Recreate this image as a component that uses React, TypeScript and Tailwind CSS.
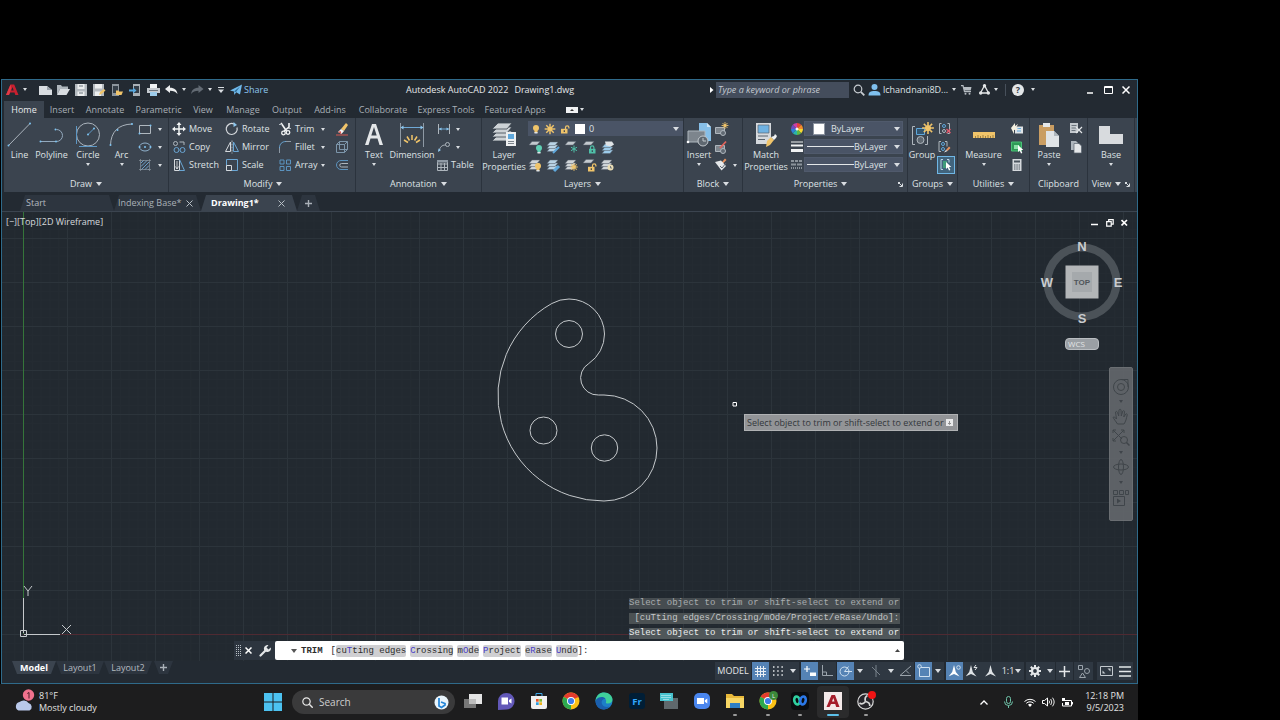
import type { ReactNode } from "react";

const INK = "#d9dde1";
const GOLD = "#f0c46a";

type IconProps = { w?: number; h?: number; box?: string; children: ReactNode };

function Icon({ w = 16, h = 16, box, children }: IconProps) {
  return (
    <svg width={w} height={h} viewBox={box ?? `0 0 ${w} ${h}`} fill="none" className="block shrink-0" aria-hidden="true">
      {children}
    </svg>
  );
}

function Caret({ small = false, color = INK }: { small?: boolean; color?: string }) {
  return small ? (
    <Icon w={4} h={3}>
      <path d="M0 0h4L2 3z" fill={color} />
    </Icon>
  ) : (
    <Icon w={6} h={4}>
      <path d="M0 0h6L3 4z" fill={color} />
    </Icon>
  );
}

function IconButton({ label, className = "", children }: { label: string; className?: string; children: ReactNode }) {
  return (
    <button type="button" aria-label={label} className={`flex shrink-0 items-center justify-center ${className}`}>
      {children}
    </button>
  );
}

/* ---------- ribbon building blocks ---------- */

function Panel({ title, caret = true, launcher = false, className, children }: { title: string; caret?: boolean; launcher?: boolean; className: string; children: ReactNode }) {
  return (
    <section className={`flex shrink-0 flex-col border-r border-[#2b333d] ${className}`}>
      <div className="flex h-[58px] pt-0.5">{children}</div>
      <div className="flex h-4 items-center">
        <button type="button" className="flex flex-1 items-center justify-center gap-1">
          {title}
          {caret && <Caret />}
        </button>
        {launcher && (
          <IconButton label={`${title} settings`} className="mr-1">
            <Icon w={5} h={5}>
              <path d="M0 .5h2M.5 0v2M1 1l3 3M4.500 1.500v3h-3" stroke={INK} />
            </Icon>
          </IconButton>
        )}
      </div>
    </section>
  );
}

function BigTool({ label, caret = false, className, children }: { label: ReactNode; caret?: boolean; className: string; children: ReactNode }) {
  return (
    <button type="button" className={`flex shrink-0 flex-col items-center ${className}`}>
      <span className="flex h-[29px] items-center">{children}</span>
      <span className="text-center leading-3 whitespace-nowrap">{label}</span>
      {caret && (
        <span className="mt-0.5">
          <Caret small />
        </span>
      )}
    </button>
  );
}

function Stack({ className = "", children }: { className?: string; children: ReactNode }) {
  return <div className={`flex shrink-0 flex-col ${className}`}>{children}</div>;
}

function Tool({ label, text, caret = false, children }: { label: string; text?: boolean; caret?: boolean; children: ReactNode }) {
  return (
    <div className="flex h-[18px] items-center">
      <button type="button" aria-label={label} className="flex items-center gap-0.5">
        {children}
        {text && <span className="whitespace-nowrap">{label}</span>}
      </button>
      {caret && (
        <IconButton label={`${label} options`} className="ml-auto w-2.5">
          <Caret small />
        </IconButton>
      )}
    </div>
  );
}

function Sheets({ c = "#cfd4d8", x = 0, y = 0 }: { c?: string; x?: number; y?: number }) {
  return (
    <g transform={`translate(${x} ${y})`} fill={c} stroke="#59636e" strokeWidth=".5">
      <path d="M1 11.500 4 8h8L9 11.500z" />
      <path d="M1 8.500 4 5h8L9 8.500z" />
      <path d="M1 5.500 4 2h8L9 5.500z" />
    </g>
  );
}

function OneSheet() {
  return <path d="M1 6 4 2.500h8L9 6z" fill="#c3c9ce" stroke="#59636e" strokeWidth=".5" />;
}

function Sun({ x, y, r = 2 }: { x: number; y: number; r?: number }) {
  const rays = [0, 45, 90, 135, 180, 225, 270, 315];
  return (
    <g transform={`translate(${x} ${y})`}>
      <circle r={r} fill={GOLD} />
      {rays.map((a) => (
        <path key={a} d={`M0 ${-r}V${-r * 1.9}`} stroke={GOLD} strokeWidth={r * 0.5} transform={`rotate(${a})`} />
      ))}
    </g>
  );
}

function Brush({ x = 0, y = 0 }: { x?: number; y?: number }) {
  return (
    <g transform={`translate(${x} ${y})`}>
      <path d="m3 5 3-3.500L7.500 3 4.500 6z" fill="#e8935f" />
      <path d="M3 5 1 7.500 4.500 6z" fill="#f2f2f2" />
    </g>
  );
}

function Bulb({ x = 0, y = 0, c = GOLD }: { x?: number; y?: number; c?: string }) {
  return (
    <g transform={`translate(${x} ${y})`}>
      <circle cx="3" cy="3" r="3" fill={c} />
      <path d="M1.500 5h3v3h-3z" fill={c} />
      <path d="M1.500 7h3v1.500h-3z" fill="#dfe3e6" />
    </g>
  );
}

function Lock({ x = 0, y = 0, c = GOLD, open = false }: { x?: number; y?: number; c?: string; open?: boolean }) {
  return (
    <g transform={`translate(${x} ${y})`}>
      <path d={open ? "M4.500 4V2.500a1.700 1.700 0 0 1 3.400 0V3.500" : "M1.500 4V2.500a1.700 1.700 0 0 1 3.400 0V4"} stroke={c} strokeWidth="1.200" />
      <path d="M0 3.800h6.500V8.500H0z" fill={c} />
      <path d="M2.700 5.300h1.200v1.700H2.700z" fill="#39424d" />
    </g>
  );
}

function Cursor({ x, y }: { x: number; y: number }) {
  return <path transform={`translate(${x} ${y})`} d="M0 0v7l1.700-1.500L3 8.500l1.300-.6L3.100 5H5.300z" fill="#fff" />;
}

/* ---------- title bar ---------- */

function TitleBar() {
  return (
    <header className="flex h-[19px] items-center">
      <div className="flex w-[404px] shrink-0 items-center">
        <IconButton label="Application menu" className="w-5">
          <Icon w={13} h={12}>
            <path d="M0 11 4.500.5h3.700L12.500 11H9.300L8.500 8.500H4.300L3 11z" fill="#c8202f" />
            <path d="M5.200 6.500h2.500L6.500 3z" fill="#232a32" />
            <path d="M0 11 4.500.5 5.300 4 3 11z" fill="#e23a46" />
          </Icon>
        </IconButton>
        <IconButton label="Application menu options" className="mr-2 w-1.5"><Caret small /></IconButton>
        <IconButton label="New" className="w-[18px]">
          <Icon w={13} h={12}><path d="M0 2h8l5 4v5H0z" fill={INK} /><path d="M8 2v4h5z" fill="#9aa2aa" /></Icon>
        </IconButton>
        <IconButton label="Open" className="w-[18px]">
          <Icon w={14} h={12}><path d="M1 11V1h4l1 1.500h6V5H4z" fill="#aeb5bb" /><path d="M4 5h10l-3.500 6H1z" fill={INK} /></Icon>
        </IconButton>
        <IconButton label="Save" className="w-[18px]">
          <Icon w={12} h={12}><path d="M0 0h12v12H0z" fill="#b4babf" /><path d="M2.500 0h7v5h-7zM2.500 7.500h7V12h-7z" fill="#eceeef" /><path d="M4 9h4M4 2h4" stroke="#6b747d" /></Icon>
        </IconButton>
        <IconButton label="Save as" className="w-[18px]">
          <Icon w={13} h={12}><path d="M0 0h11v12H0z" fill="#b4babf" /><path d="M2 0h7v4.500H2zM2 7.500h6V12H2z" fill="#eceeef" /><path d="m6 11 1-3 4-3 1.500 1.500L8.500 10z" fill={GOLD} /></Icon>
        </IconButton>
        <IconButton label="Open from web and mobile" className="w-[18px]">
          <Icon w={12} h={12}><path d="M1 0h7v12H1z" fill="#8c959d" /><path d="M2 2h5v7H2z" fill="#353f49" /><path d="M5 11V6.500h2.500L8 7.500h4L10.500 11z" fill={GOLD} /></Icon>
        </IconButton>
        <IconButton label="Save to web and mobile" className="w-[18px]">
          <Icon w={12} h={12}><path d="M4 0h7v12H4z" fill="#aab1b7" /><path d="M5 2h5v7H5z" fill="#353f49" /><path d="M0 5.500h4V3.500L7.500 6.500 4 9.500V7.500H0z" fill="#5aa9de" /></Icon>
        </IconButton>
        <IconButton label="Plot" className="w-[18px]">
          <Icon w={13} h={12}><path d="M3 0h7v4H3z" fill="#f1f3f4" /><path d="M0 4h13v5H0z" fill="#c5cacf" /><path d="M3 8h7v4H3z" fill="#9ccbea" /><path d="M2 6.500h9" stroke="#6b747d" /></Icon>
        </IconButton>
        <IconButton label="Undo" className="w-[18px]">
          <Icon w={13} h={10}><path d="M0 4 5 0v2.700C9.500 2.700 12 5 12.500 9 10.500 6.500 8.500 5.700 5 5.700V8z" fill="#eceeef" /></Icon>
        </IconButton>
        <IconButton label="Undo history" className="w-2"><Caret small /></IconButton>
        <IconButton label="Redo" className="w-[18px]">
          <Icon w={13} h={10}><path d="M12.500 4 7.500 0v2.700C3 2.700.5 5 0 9c2-2.500 4-3.300 7.500-3.300V8z" fill="#626a73" /></Icon>
        </IconButton>
        <IconButton label="Redo history" className="w-2"><Caret small /></IconButton>
        <IconButton label="Customize quick access toolbar" className="mr-1 ml-0.5 w-2.5">
          <Icon w={6} h={6}><path d="M0 .5h6" stroke={INK} /><path d="M0 2.500h6L3 6z" fill={INK} /></Icon>
        </IconButton>
        <button type="button" className="flex items-center gap-0.5 text-[#8cc6ee]">
          <Icon w={12} h={12}><path d="M0 6.500 12 .5 10 10.500 6.200 8.200 4.300 11 4 7.500z" fill="#70b9ea" /><path d="m4 7.500 6-5-4 5.500" fill="#2c6b96" /></Icon>
          Share
        </button>
      </div>
      <h1 className="flex flex-1 gap-1.5 font-normal whitespace-pre text-[#e6e8ea]"><span>Autodesk AutoCAD 2022</span><span>Drawing1.dwg</span></h1>
      <div className="flex items-center">
        <Icon w={4} h={6}><path d="M0 0v6l3.500-3z" fill="#fff" /></Icon>
        <input aria-label="Search" placeholder="Type a keyword or phrase" className="ml-0.5 h-4 w-[133px] bg-[#444d5c] px-0.5 italic placeholder:text-[#c3c9d0]" />
        <IconButton label="Search help" className="w-[19px]">
          <Icon w={12} h={12}><circle cx="5" cy="5" r="3.800" stroke="#c8cdd2" strokeWidth="1.200" /><path d="m7.800 7.800 3.500 3.500" stroke="#c8cdd2" strokeWidth="1.800" /></Icon>
        </IconButton>
        <button type="button" className="flex w-20 items-center gap-0.5 whitespace-nowrap">
          <Icon w={13} h={12}><circle cx="6.500" cy="3" r="3" fill="#7fc0ee" /><path d="M.5 11.500c0-3.500 2-4.500 6-4.500s6 1 6 4.500z" fill="#7fc0ee" /></Icon>
          lchandnani8D...
        </button>
        <IconButton label="Account options" className="ml-1 w-1"><Caret small /></IconButton>
        <IconButton label="App store" className="ml-0.5 w-4">
          <Icon w={11} h={10}><path d="M0 .7h2l1.500 6H10" stroke="#b5bbc1" strokeWidth="1.200" /><path d="M2.500 2h8L9.700 5.500H3.300z" fill="#b5bbc1" /><circle cx="4.500" cy="8.700" r="1" fill="#b5bbc1" /><circle cx="8.500" cy="8.700" r="1" fill="#b5bbc1" /></Icon>
        </IconButton>
        <IconButton label="Autodesk app" className="ml-0.5 w-4">
          <Icon w={11} h={11}><path d="M5.500 1.500 1.500 9h8z" stroke="#e3e6e8" strokeWidth="1.300" /><circle cx="5.500" cy="1.800" r="1.700" fill="#e3e6e8" /><circle cx="1.700" cy="9" r="1.700" fill="#e3e6e8" /><circle cx="9.300" cy="9" r="1.700" fill="#e3e6e8" /></Icon>
        </IconButton>
        <IconButton label="Autodesk app options" className="mx-0.5 w-1"><Caret small /></IconButton>
        <span className="mx-[5px] h-3 w-px bg-[#47505b]" />
        <IconButton label="Help" className="w-3.5">
          <span className="flex size-3 items-center justify-center rounded-full bg-[#e3e6e8] font-bold text-[#343c46]">?</span>
        </IconButton>
        <IconButton label="Help options" className="ml-1.5 w-1"><Caret small /></IconButton>
        <IconButton label="Minimize" className="ml-[46px] w-[18px]"><Icon w={8} h={8}><path d="M1 7h6" stroke="#fff" strokeWidth="1.500" /></Icon></IconButton>
        <IconButton label="Maximize" className="w-[18px]"><Icon w={9} h={8}><path d="M.5.500h8v7h-8zM.5 1.500h8" stroke="#fff" /></Icon></IconButton>
        <IconButton label="Close" className="mr-0.5 w-[18px]"><Icon w={8} h={8}><path d="m.5.500 7 7m0-7-7 7" stroke="#fff" strokeWidth="1.500" /></Icon></IconButton>
      </div>
    </header>
  );
}

const MENU = [
  ["Home", "w-10"], ["Insert", "w-9"], ["Annotate", "w-[50px]"], ["Parametric", "w-[57px]"], ["View", "w-8"],
  ["Manage", "w-12"], ["Output", "w-10"], ["Add-ins", "w-[46px]"], ["Collaborate", "w-[60px]"],
  ["Express Tools", "w-[66px]"], ["Featured Apps", "w-[72px]"],
];

function MenuTabs() {
  return (
    <nav className="mt-0.5 flex h-[17px] items-center pl-0.5">
      {MENU.map(([name, w], i) => (
        <button key={name} type="button" className={`h-full shrink-0 whitespace-nowrap ${w} ${i === 0 ? "bg-[#3b444f] text-[#e9ebed]" : "text-[#a9b0b7]"}`}>
          {name}
        </button>
      ))}
      <IconButton label="Ribbon display" className="ml-[15px]">
        <Icon w={12} h={6}><path d="M0 0h12v6H0z" fill="#f0f2f3" /><path d="M4 4h4L6 2z" fill="#333" /></Icon>
      </IconButton>
      <IconButton label="Ribbon display options" className="ml-0.5"><Caret small /></IconButton>
    </nav>
  );
}

/* ---------- ribbon ---------- */

const dot = (x: number, y: number) => <circle key={`${x}-${y}`} cx={x} cy={y} r="1" fill="#7ec3f0" />;

function DrawPanel() {
  return (
    <Panel title="Draw" className="w-[165px]">
      <BigTool label="Line" className="w-[31px]">
        <Icon w={25} h={25}><path d="M1.500 23.500 23 1.500" stroke="#aab3bc" />{dot(1.5, 23.5)}{dot(23, 1.5)}</Icon>
      </BigTool>
      <BigTool label="Polyline" className="w-[33px]">
        <Icon w={25} h={20}><path d="M1.500 16.500h16a6 6 0 0 0 0-12" stroke="#93a9bd" />{dot(1.5, 16.5)}{dot(17, 16.5)}{dot(16.5, 4.5)}</Icon>
      </BigTool>
      <BigTool label="Circle" caret className="w-10">
        <Icon w={26} h={26}><circle cx="13" cy="12.500" r="11.500" stroke="#aab3bc" /><path d="m13 12.500 6-6M1.500 4v18M4 24.500h18" stroke="#5d97c4" />{dot(19, 6.5)}{dot(13, 12.5)}</Icon>
      </BigTool>
      <BigTool label="Arc" caret className="w-[27px]">
        <Icon w={25} h={25}><path d="M1.500 23C2 10 9 2.500 23 2" stroke="#aab3bc" />{dot(1.5, 23)}{dot(8.5, 8)}{dot(23, 2)}</Icon>
      </BigTool>
      <Stack className="w-[30px] pl-0.5">
        <Tool label="Rectangle" caret><Icon><path d="M2.500 4.500h11v8h-11z" stroke="#b0b8bf" />{dot(2.5, 12.5)}{dot(13.5, 4.5)}</Icon></Tool>
        <Tool label="Ellipse" caret><Icon><ellipse cx="8" cy="8" rx="5.500" ry="4" stroke="#8fb0cb" />{dot(8, 8)}{dot(2.5, 8)}{dot(13.5, 8)}</Icon></Tool>
        <Tool label="Hatch" caret><Icon><path d="m4 6 3-3M4 9.500 10.500 3M4 13l8-8M7.500 13 12 8.500M11 13l1-1" stroke="#6d9fc6" /><path d="M3.500 2v12M12.500 2v12M2 3.500h12M2 12.500h12" stroke="#8b959e" strokeWidth=".7" /></Icon></Tool>
      </Stack>
    </Panel>
  );
}

function ModifyPanel() {
  return (
    <Panel title="Modify" className="w-[187px] pl-0.5">
      <Stack className="w-[53px]">
        <Tool label="Move" text><Icon><path d="M8 2v12M2 8h12" stroke="#f1f3f4" strokeWidth="1.500" /><path d="M8 1l2.500 3h-5zM8 15l2.500-3h-5zM1 8l3-2.500v5zM15 8l-3-2.500v5z" fill="#f1f3f4" /></Icon></Tool>
        <Tool label="Copy" text><Icon><circle cx="4.500" cy="4.500" r="2" stroke="#aeb6bd" /><path d="M8.500 3H13v3" stroke="#aeb6bd" /><circle cx="5.500" cy="11" r="2.500" stroke="#6aa6d4" /><circle cx="11.500" cy="11" r="2.500" stroke="#6aa6d4" /></Icon></Tool>
        <Tool label="Stretch" text><Icon><path d="M3.500 2.500h5v11h-5z" stroke="#d5d9dd" /><path d="m8.500 2.500 5 11h-5" stroke="#6aa6d4" /><path d="M6 4v8M4.500 9.500 6 12l1.500-2.500" stroke="#e4e7e9" strokeWidth=".8" /></Icon></Tool>
      </Stack>
      <Stack className="w-[53px]">
        <Tool label="Rotate" text><Icon><path d="M10 3a5.500 5.500 0 1 0 3 3.500" stroke="#d5d9dd" strokeWidth="1.200" /><path d="M9.500 1v5l3.500-2z" fill="#8cc6ee" /></Icon></Tool>
        <Tool label="Mirror" text><Icon><path d="M6.500 3v9.500h-5z" stroke="#d5d9dd" /><path d="M9.500 3v9.500h5z" stroke="#6aa6d4" /><path d="M8 1.500v13" stroke="#aeb6bd" strokeDasharray="2 1" /></Icon></Tool>
        <Tool label="Scale" text><Icon><path d="M2.500 2.500h11v11h-11z" stroke="#6aa6d4" /><path d="M2.500 8.500h5v5h-5z" stroke="#d5d9dd" fill="#3b444f" /></Icon></Tool>
      </Stack>
      <Stack className="w-[51px]">
        <Tool label="Trim" text caret><Icon><path d="m4 2 5.500 8M12 2v4L7 10" stroke="#f1f3f4" strokeWidth="1.600" /><path d="M2 3.500h3M11 7.500h3" stroke="#aeb6bd" /><circle cx="6.500" cy="12" r="1.800" stroke="#f1f3f4" strokeWidth="1.300" /><circle cx="11" cy="11.500" r="1.800" stroke="#f1f3f4" strokeWidth="1.300" /></Icon></Tool>
        <Tool label="Fillet" text caret><Icon><path d="M2.500 14V8M8 2.500h6" stroke="#8e99a4" /><path d="M2.500 9c0-4 2.500-6.500 6.500-6.500" stroke="#6aa6d4" /></Icon></Tool>
        <Tool label="Array" text caret><Icon><path d="M3 3h4v4H3zM3 9.500h4v4H3zM9.500 9.500h4v4h-4zM9.500 3h4v4h-4z" stroke="#5b93bf" /></Icon></Tool>
      </Stack>
      <Stack className="ml-1.5">
        <Tool label="Erase"><Icon><path d="M7 8 12 2l2 2-4 6z" fill="#f0c46a" /><path d="m7 8 3 2-2.500 3L4 11z" fill="#f4f5f6" /><path d="M4 11l2.500-1 1 3z" fill="#e04a3f" /><path d="M2 14h12" stroke="#d8574f" /></Icon></Tool>
        <Tool label="Explode"><Icon><path d="M2.500 5.500h8v8h-8zM5.500 2.500h8v8h-8z" stroke="#7d96ab" /><path d="M2.500 5.500l3-3M10.500 5.500l3-3M10.500 13.500l3-3" stroke="#7d96ab" /></Icon></Tool>
        <Tool label="Offset"><Icon><path d="M14 3.500H7a4.500 4.500 0 0 0 0 9h7" stroke="#5b93bf" /><path d="M14 6.500H7.500a1.700 1.700 0 0 0 0 3.500H14" stroke="#aeb6bd" /></Icon></Tool>
      </Stack>
    </Panel>
  );
}

function AnnotationPanel() {
  return (
    <Panel title="Annotation" className="w-[126px]">
      <BigTool label="Text" caret className="w-9">
        <Icon w={20} h={24}><path d="M8 1h4l7 21h-3.500l-2-6.500H6.500l-2 6.500H1zM7.300 12.500h5.400L10 4z" fill="#e4e7e9" /></Icon>
      </BigTool>
      <BigTool label="Dimension" className="w-10">
        <Icon w={26} h={26}><path d="M1.500 1v24M24.500 1v24" stroke="#8e99a4" /><path d="M2 5.500h22" stroke="#6fa9d6" /><path d="m1.500 5.500 3-2v4zM24.500 5.500l-3-2v4z" fill="#8cc6ee" /><path d="M13 13v5M8 14.500l2.500 4M18 14.500l-2.500 4M5 18l4 2.500M21 18l-4 2.500" stroke={GOLD} strokeWidth="1.500" /></Icon>
      </BigTool>
      <Stack className="ml-1 w-[27px]">
        <Tool label="Linear" caret><Icon><path d="M2.500 3v10M13.500 3v10" stroke="#aeb6bd" /><path d="M3 8h10" stroke="#6aa6d4" /><path d="m3 8 2.500-1.500v3zM13 8l-2.500-1.500v3z" fill="#8cc6ee" /></Icon></Tool>
        <Tool label="Leader" caret><Icon><path d="M3 12c1-4 3-6 6.500-6" stroke="#aeb6bd" /><circle cx="11.500" cy="5.500" r="2" stroke="#aeb6bd" /><path d="m2 13 .5-3.500L5 11z" fill="#8cc6ee" /></Icon></Tool>
        <Tool label="Table" text><Icon w={13}><path d="M1.500 3.500h10v10h-10zM1.500 7h10M1.500 10.500h10M5 6v7M8.500 6v7" stroke="#aeb6bd" /><path d="M1 3h11v2.500H1z" fill="#8e99a4" /></Icon></Tool>
      </Stack>
    </Panel>
  );
}

function LayersPanel() {
  return (
    <Panel title="Layers" className="w-[202px]">
      <BigTool label={<>Layer<br />Properties</>} className="w-11">
        <Icon w={26} h={26}>
          <g fill="#cdd2d6" stroke="#3b444f" strokeWidth=".8"><path d="m1 19 6-6h14l-5 6z" /><path d="m1 15 6-6h14l-5 6z" /><path d="m1 11 6-6h14l-5 6z" /><path d="m1 7 6-6h14l-5 6z" /></g>
          <path d="M15 10h10v14H15z" fill="#eef0f1" /><path d="M17 12h6v5h-6z" fill="#5fa8dc" /><path d="M17 19.500h6M17 21.500h6" stroke="#7d858d" />
        </Icon>
      </BigTool>
      <div className="ml-0.5 flex flex-1 flex-col">
        <div className="mt-px mb-0.5 flex h-[15px] items-center bg-[#4a5466] pr-1">
          <Icon w={16}><Bulb x={5} y={4} /></Icon>
          <Icon w={14}><Sun x={6} y={8} r={2.8} /></Icon>
          <Icon w={15}><Lock x={3} y={4} open /></Icon>
          <span className="mx-0.5 size-2.5 bg-white" />
          <select aria-label="Current layer" className="min-w-0 flex-1 appearance-none bg-transparent pl-0.5">
            <option>0</option>
          </select>
          <Caret />
        </div>
        <div className="grid grid-cols-[repeat(5,18px)]">
          <Tool label="Layer off"><Icon><OneSheet /><Bulb x={8} y={6} c="#5fd0b5" /></Icon></Tool>
          <Tool label="Isolate layer"><Icon><Sheets y={1} c="#b9d3e6" /><path d="m7 14 6-6" stroke="#5fa8dc" strokeWidth="2" /></Icon></Tool>
          <Tool label="Freeze layer"><Icon><OneSheet /><path d="M10 6.500v7M7 8.200l6 3.500M13 8.200l-6 3.500" stroke="#4fbfa8" /></Icon></Tool>
          <Tool label="Lock layer"><Icon><OneSheet /><Lock x={7} y={6} c="#4fbfa8" /></Icon></Tool>
          <Tool label="Make current"><Icon><Sheets x={1} y={3} c="#9ccbea" /><path d="M5 2.500h7l2 3-3 2-5-1z" fill="#dfe3e6" /></Icon></Tool>
          <Tool label="Turn all layers on"><Icon><Sheets y={1} /><Bulb x={7} y={6} /></Icon></Tool>
          <Tool label="Unisolate layer"><Icon><Sheets y={1} c="#b9d3e6" /><path d="m8 14 5-5" stroke="#5fa8dc" strokeWidth="3" /></Icon></Tool>
          <Tool label="Thaw all layers"><Icon><Sheets y={1} /><Sun x={10} y={10} /></Icon></Tool>
          <Tool label="Unlock layer"><Icon><OneSheet /><Lock x={6} y={6} open /></Icon></Tool>
          <Tool label="Match layer"><Icon><Sheets y={1} /><circle cx="10.500" cy="10.500" r="3" fill="#e9dcb4" /><path d="M10.500 9v2h1.500" stroke="#59636e" strokeWidth=".8" /></Icon></Tool>
        </div>
      </div>
    </Panel>
  );
}

function BlockPanel() {
  return (
    <Panel title="Block" className="w-[59px]">
      <BigTool label="Insert" caret className="w-[30px]">
        <Icon w={26} h={26}><path d="M13 1h8l4 4v14H13z" fill="#86bfe8" /><path d="M21 1v4h4z" fill="#cfe6f6" /><path d="M2 9h17v11H2z" fill="#7d858d" stroke="#aeb6bd" /><circle cx="17" cy="19" r="5" fill="#5f6871" stroke="#c3c9ce" /><path d="M17 16v3h3" stroke="#c3c9ce" /><circle cx="2" cy="20" r="1.300" fill="#fff" /></Icon>
      </BigTool>
      <Stack className="w-[26px]">
        <Tool label="Create block"><Icon><path d="M1.500 6.500h9v6h-9z" fill="#7d858d" stroke="#aeb6bd" /><circle cx="9" cy="12" r="2.500" fill="#5f6871" stroke="#aeb6bd" /><Sun x={11} y={4.5} r={1.8} /></Icon></Tool>
        <Tool label="Edit block"><Icon><path d="M1.500 6.500h9v6h-9z" fill="#7d858d" stroke="#aeb6bd" /><circle cx="9" cy="12" r="2.500" fill="#5f6871" stroke="#aeb6bd" /><path d="M6 9 12 2.500" stroke="#e2645c" strokeWidth="1.800" /></Icon></Tool>
        <Tool label="Edit attributes" caret><Icon><path d="m1 5 6-1.500L12 9l-4.500 4.500z" fill="#e4e7e9" /><path d="m6 9 2 2 4-5" stroke="#5f6871" /><Brush x={5} y={0} /></Icon></Tool>
      </Stack>
    </Panel>
  );
}

function PropertySelect({ label, line }: { label: string; line: boolean }) {
  return (
    <div className="mt-px mb-0.5 flex h-[15px] items-center border border-[#56607280] bg-[#4a5466] pr-0.5">
      {line ? <span className="ml-0.5 h-px w-[47px] bg-[#e4e7e9]" /> : <span className="mr-1.5 ml-2 size-3 border border-[#8c94a0] bg-white" />}
      <select aria-label={label} className="min-w-0 flex-1 appearance-none bg-transparent">
        <option>ByLayer</option>
      </select>
      <Caret />
    </div>
  );
}

const WHEEL = ["#e8403a", "#f28b2b", "#f7d832", "#5cb947", "#2bb5a9", "#2f7fd6", "#6a4ec0", "#c740a6"];

function PropertiesPanel() {
  return (
    <Panel title="Properties" launcher className="w-[165px]">
      <BigTool label={<>Match<br />Properties</>} className="w-[46px]">
        <Icon w={26} h={26}><path d="M3 1h15v21H3z" fill="#d5d9dd" /><path d="M5 3h11v8H5z" fill="#6fb2e2" stroke="#59636e" strokeWidth=".7" /><path d="M5 14h10M5 17.500h7" stroke="#59636e" /><path d="m14 19 4-4 3 3-4 5-4 2z" fill={GOLD} /><path d="m18 15 3-1 1-2 2 2-1 2-2 2z" fill="#f1f3f4" /></Icon>
      </BigTool>
      <Stack className="w-[15px] items-center">
        <Tool label="Colour wheel">
          <Icon w={12} h={12}>
            {WHEEL.map((c, i) => <path key={c} d="M6 6V0a6 6 0 0 1 4.240 1.760z" fill={c} transform={`rotate(${i * 45} 6 6)`} />)}
            <circle cx="6" cy="6" r="1.500" fill="#f3f3f3" />
          </Icon>
        </Tool>
        <Tool label="Lineweight"><Icon w={12} h={12}><path d="M0 1h12" stroke="#f1f3f4" /><path d="M0 4.500h12" stroke="#f1f3f4" strokeWidth="2" /><path d="M0 9.500h12" stroke="#f1f3f4" strokeWidth="3" /></Icon></Tool>
        <Tool label="Linetype"><Icon w={12} h={12}><path d="M0 2h12" stroke="#8b939b" strokeWidth="2" strokeDasharray="3 1" /><path d="M0 5.500h12" stroke="#8b939b" strokeWidth="2" strokeDasharray="5 1" /><path d="M0 9h12" stroke="#8b939b" strokeWidth="2" strokeDasharray="1 1" /></Icon></Tool>
      </Stack>
      <div className="mr-1 flex flex-1 flex-col">
        <PropertySelect label="Object colour" line={false} />
        <PropertySelect label="Lineweight" line />
        <PropertySelect label="Linetype" line />
      </div>
    </Panel>
  );
}

function RestPanels() {
  return (
    <>
      <Panel title="Groups" className="w-[50px]">
        <BigTool label="Group" className="w-7">
          <Icon w={24} h={26}><path d="M5 4.500H2.500v18H5M15 22.500h2.500V14" stroke="#aeb6bd" /><path d="M6.500 6.500h8v6h-8z" fill="#33556f" stroke="#5fa8dc" /><circle cx="10.500" cy="18" r="3.500" fill="#5f6871" stroke="#aeb6bd" /><Sun x={18} y={6} r={3.1} /></Icon>
        </BigTool>
        <Stack className="ml-px">
          <Tool label="Ungroup"><Icon><path d="M4.500 2.500h-2v10h2M10.500 2.500h2v10h-2" stroke="#aeb6bd" /><circle cx="7" cy="5" r="1.500" stroke="#5fa8dc" /><circle cx="7" cy="10" r="1.500" stroke="#aeb6bd" /><path d="m9.500 8 4 4m0-4-4 4" stroke="#e2566a" strokeWidth="1.300" /></Icon></Tool>
          <Tool label="Group edit"><Icon><path d="M4 2.500H2v10h2M8 2.500h2v5" stroke="#aeb6bd" /><circle cx="6" cy="5" r="1.500" stroke="#5fa8dc" /><circle cx="6" cy="10" r="1.500" stroke="#5fa8dc" /><Brush x={6} y={6} /></Icon></Tool>
          <div className="flex h-[18px] items-center">
            <button type="button" aria-label="Group selection" aria-pressed="true" className="size-[18px] border border-[#6fb7e6] bg-[#41647d]">
              <Icon><path d="M5 2.500H3v10h2M9 2.500h2v3" stroke="#b9d4e6" /><path d="M5 4h4v7H5z" fill="#3f9c7c" /><Cursor x={8} y={5} /></Icon>
            </button>
          </div>
        </Stack>
      </Panel>
      <Panel title="Utilities" className="w-[72px]">
        <BigTool label="Measure" caret className="w-[51px]">
          <Icon w={22} h={8}><path d="M0 1h22v6H0z" fill={GOLD} /><path d="M2.500 7V5M5 7V4M7.500 7V5M10 7V4M12.500 7V5M15 7V4M17.500 7V5M20 7V4" stroke="#7a6430" strokeWidth=".7" /></Icon>
        </BigTool>
        <Stack>
          <Tool label="Select all"><Icon><path d="M6 5.500h8v7H6z" fill="#dfe3e6" /><path d="M8 7.500h4M8 10h4" stroke="#5fa8dc" /><path d="M2 7l4-5v3l3-2-2 4 3 1-5 1v4z" fill="#f4f0e0" /></Icon></Tool>
          <Tool label="Quick select"><Icon><path d="M2.500 3h10v9h-10z" fill="#2f9a57" stroke="#49c277" /><path d="M5 6h5v4H5z" fill="#8be0a8" /><Cursor x={9} y={6} /></Icon></Tool>
          <Tool label="Calculator"><Icon><path d="M3.500 2h9v12h-9z" fill="#d5d9dd" /><path d="M5 3.500h6v2H5z" fill="#4b555f" /><path d="M5 8h6M5 10h6M5 12h6" stroke="#4b555f" strokeDasharray="1.500 .8" /></Icon></Tool>
        </Stack>
      </Panel>
      <Panel title="Clipboard" caret={false} className="w-[58px]">
        <BigTool label="Paste" caret className="w-[38px]">
          <Icon w={22} h={26}><path d="M1 3h15v20H1z" fill="#c99d62" /><path d="M5 1h7v4H5z" fill="#e4e7e9" /><path d="M8 9h8l5 5v11H8z" fill="#dfe3e6" /><path d="M16 9v5h5z" fill="#aeb6bd" /></Icon>
        </BigTool>
        <Stack>
          <Tool label="Cut"><Icon><path d="M2 2h8v10H2z" fill="#c3c9ce" /><path d="M3.500 4.500h5M3.500 7h5M3.500 9.500h4" stroke="#6b747d" /><path d="m8 6 6 6m0-6-6 6" stroke="#e4e7e9" strokeWidth="1.200" /></Icon></Tool>
          <Tool label="Copy to clipboard"><Icon><path d="M3 2h5l2 2v7H3z" fill="#aeb6bd" /><path d="M6 4.500h5l2.500 2.500v7H6z" fill="#e4e7e9" stroke="#59636e" strokeWidth=".7" /></Icon></Tool>
        </Stack>
      </Panel>
      <Panel title="View" launcher className="w-[47px]">
        <BigTool label="Base" caret className="w-[46px]">
          <Icon w={24} h={20}><path d="M0 1h11v8h13v10H0z" fill="#d8dbde" /></Icon>
        </BigTool>
      </Panel>
    </>
  );
}

/* ---------- drawing tabs and canvas ---------- */

const plus = <Icon w={7} h={7}><path d="M3.500 0v7M0 3.500h7" stroke="#aab1b8" strokeWidth="1.400" /></Icon>;
const cross = <Icon w={7} h={7}><path d="m.5.500 6 6m0-6-6 6" stroke="#b9c0c6" /></Icon>;
const TAB_SHAPE = "[clip-path:polygon(0_100%,5px_0,calc(100%-5px)_0,100%_100%)]";

function FileTabs() {
  return (
    <div className="flex h-5 items-end border-b border-[#3b444f] bg-[#232a32] pl-[18px]">
      <button type="button" className={`h-4 w-[94px] bg-[#2d353f] pl-1.5 text-left text-[#b4bac0] ${TAB_SHAPE}`}>Start</button>
      <div className={`flex h-4 w-[87px] items-center justify-between bg-[#2d353f] pr-2 pl-1 text-[#aab1b8] ${TAB_SHAPE}`}>
        <button type="button">Indexing Base*</button>
        <button type="button" aria-label="Close Indexing Base">{cross}</button>
      </div>
      <div className={`flex h-4 w-[96px] items-center justify-between bg-[#3b444f] pr-3 pl-2.5 font-bold text-white ${TAB_SHAPE}`}>
        <button type="button">Drawing1*</button>
        <button type="button" aria-label="Close Drawing1">{cross}</button>
      </div>
      <button type="button" aria-label="New drawing" className={`flex h-4 w-[23px] items-center justify-center bg-[#2d353f] ${TAB_SHAPE}`}>{plus}</button>
    </div>
  );
}

const KEYWORDS = [["cu", "T", "ting edges"], ["", "C", "rossing"], ["m", "O", "de"], ["", "P", "roject"], ["e", "R", "ase"], ["", "U", "ndo"]];
const MONO = "font-['Liberation_Mono',monospace]";

function CommandLine() {
  return (
    <div className={`absolute bottom-px left-[232px] flex h-[19px] w-[670px] items-center bg-[#2d353f] ${MONO}`}>
      <span className="ml-0.5 grid grid-cols-3 gap-px">
        {Array.from({ length: 18 }, (_, i) => <i key={i} className="size-px bg-[#b9c0c6]" />)}
      </span>
      <IconButton label="Close command line" className="ml-[3px] w-2"><Icon w={7} h={7}><path d="m.5.500 6 6m0-6-6 6" stroke="#fff" strokeWidth="1.500" /></Icon></IconButton>
      <IconButton label="Customize command line" className="mr-[3px] ml-1.5 w-3.5">
        <Icon w={12} h={12}><path d="m1.500 10.500 5.500-5.500" stroke="#e4e7e9" strokeWidth="2.200" strokeLinecap="round" /><path d="M11.700 2.500 9.500 4.500 7.500 2.500 9.500.3A3.500 3.500 0 1 0 11.700 2.500z" fill="#e4e7e9" /></Icon>
      </IconButton>
      <div className="flex h-full flex-1 items-center rounded-xs bg-white pr-1 pl-4 text-[#2c2c2c]">
        <Icon w={6} h={4}><path d="M0 0h6L3 4z" fill="#555" /></Icon>
        <span className="ml-1 pr-2 font-bold">TRIM</span>
        <span>[</span>
        <span className="flex gap-1">
          {KEYWORDS.map(([a, b, c]) => (
            <button key={c} type="button" className="rounded-xs bg-[#cfcfd2]">
              {a}<span className="text-[#4a3ec8]">{b}</span>{c}
            </button>
          ))}
        </span>
        <span>]:</span>
        <IconButton label="Command history" className="ml-auto"><Icon w={5} h={3}><path d="M0 3h5L2.500 0z" fill="#444" /></Icon></IconButton>
      </div>
    </div>
  );
}

function ViewCube() {
  return (
    <div className="absolute top-6 right-3 flex w-[86px] flex-col items-center">
      <svg width="86" height="92" viewBox="-43 -46 86 92" role="img" aria-label="View cube" className="font-['Liberation_Sans',sans-serif] font-bold">
        <circle r="34.500" fill="none" stroke="#4b5258" strokeWidth="8" />
        <rect x="-16.500" y="-16.500" width="33" height="33" fill="#b3b6b8" />
        <rect x="-10" y="-10" width="20" height="20" fill="#a5a9ac" />
        <g fontSize="13" fill="#c9cccf" textAnchor="middle">
          <text y="-31">N</text>
          <text y="41">S</text>
          <text x="-35" y="5">W</text>
          <text x="36" y="5">E</text>
        </g>
        <text y="3" fontSize="8" fill="#4f555a" textAnchor="middle">TOP</text>
      </svg>
      <button type="button" className="mt-2.5 flex h-3 w-[34px] items-center rounded-sm border border-[#b9bdc1] bg-[#9a9fa4] pl-0.5 text-[8px] text-[#e2e4e6]">WCS</button>
    </div>
  );
}

function NavBar() {
  const s = "#43484d";
  return (
    <div className="absolute top-[155px] right-[4px] flex h-[154px] w-6 flex-col items-center justify-between rounded-xs border border-[#72767a] bg-[#64686c] pt-2.5 pb-3 opacity-90">
      <IconButton label="Steering wheel"><Icon w={18} h={18}><circle cx="9" cy="9" r="7.500" stroke={s} /><circle cx="9" cy="9" r="3.500" stroke={s} /><path d="M9 1.500h7V9" stroke={s} /></Icon></IconButton>
      <Caret small color={s} />
      <IconButton label="Pan"><Icon w={18} h={17}><path d="M5.500 16C3.500 13 2 11 1 9.500c1-1 2.500 0 3.500 1.500L3.500 4c.8-1 1.800-.5 2 .5L6.700 8 7 2c.5-1 1.700-1 2 0l.3 6 1.500-5c.7-.8 1.800-.3 1.700.7L11.800 9l2-3c.7-.6 1.700 0 1.400 1-1 4-1.200 6-3.200 9z" stroke={s} /></Icon></IconButton>
      <IconButton label="Zoom"><Icon w={18} h={17}><path d="m1 1 9 9M12 1 1 12M1 4V1h3M9 1h3v3M1 9v3h3" stroke={s} /><circle cx="12" cy="11" r="3.500" stroke={s} /><path d="m14.500 13.500 3 3" stroke={s} strokeWidth="1.500" /></Icon></IconButton>
      <Caret small color={s} />
      <IconButton label="Orbit"><Icon w={18} h={18}><ellipse cx="9" cy="9" rx="7.500" ry="3" stroke={s} /><ellipse cx="9" cy="9" rx="2.500" ry="7.500" stroke={s} /></Icon></IconButton>
      <Caret small color={s} />
      <IconButton label="Show motion"><Icon w={18} h={20}><path d="M1.500 2.500h4v4h-4zM7.500 2.500h4v4h-4zM13.500 2.500h3v4h-3zM1.500 8.500h11v9h-11z" stroke={s} /><path d="m5 10.500 4 2.500-4 2.500z" fill={s} /></Icon></IconButton>
    </div>
  );
}

function Canvas() {
  return (
    <main className="relative h-[449px] overflow-hidden bg-[#222930]">
      <svg className="absolute inset-0 size-full" role="img" aria-label="Model space drawing">
        <defs>
          <pattern id="minor" width="8.800" height="8.800" patternUnits="userSpaceOnUse" x="21" y="26"><path d="M.5 0v8.800M0 .5h8.800" stroke="#242b32" /></pattern>
          <pattern id="major" width="44" height="44" patternUnits="userSpaceOnUse" x="21" y="26"><path d="M.5 0v44M0 .5h44" stroke="#2c343b" /></pattern>
        </defs>
        <rect width="100%" height="100%" fill="url(#minor)" />
        <rect width="100%" height="100%" fill="url(#major)" />
        <path d="M21.500 0v422" stroke="#35753a" />
        <path d="M21 422.500h2000" stroke="#4f2a32" />
        <g fill="none" stroke="#c5c9cc">
          <path d="M18.500 418.500h6v6h-6zM21.500 421V386M22 422.500h36" />
          <path d="m22 374 4 5 4-5M26 379v5M60 413l9 9M69 413l-9 9" />
          <g transform="translate(-2 -212)">
            <path d="M551.8 303.500A35.500 35.500 0 0 1 569 299A35.500 35.500 0 0 1 604.500 334A35.500 35.500 0 0 1 588.800 363.500A17 17 0 0 0 598.500 395H604A53 53 0 0 1 604 501A105.500 105.500 0 0 1 551.800 303.500z" />
            <circle cx="569" cy="334" r="13.500" />
            <circle cx="543.500" cy="430.500" r="13.500" />
            <circle cx="604.500" cy="448" r="13.200" />
            <path d="M733 402.500h3.500v3.500H733z" stroke="#fff" />
          </g>
        </g>
      </svg>
      <div className="absolute top-1 left-1 text-[#d5d9dd]">[−][Top][2D Wireframe]</div>
      <div className="absolute top-[7px] right-2 flex gap-[7px]">
        <IconButton label="Minimize drawing"><Icon w={8} h={8}><path d="M0 5.500h7" stroke="#fff" strokeWidth="1.500" /></Icon></IconButton>
        <IconButton label="Restore drawing"><Icon w={8} h={8}><path d="M.7 2.700h4.500v4.500H.7zM2.700 2.500V.7h4.500v4.500H5.500" stroke="#fff" strokeWidth="1.200" /></Icon></IconButton>
        <IconButton label="Close drawing"><Icon w={8} h={8}><path d="m.5 1 5.500 5.500M6 1 .5 6.500" stroke="#fff" strokeWidth="1.700" /></Icon></IconButton>
      </div>
      <ViewCube />
      <NavBar />
      <div role="tooltip" className="absolute top-[202px] left-[742px] flex h-[17px] w-[214px] items-center justify-between border border-[#b0b2b4] bg-[#929497] pr-1 pl-0.5 whitespace-nowrap text-[#33373b]">
        Select object to trim or shift-select to extend or
        <Icon w={7} h={7}><path d="M0 0h7v7H0z" fill="#e9eaeb" /><path d="M3.500 2v3M2 4l1.500 1.500L5 4" stroke="#777" strokeWidth=".8" /></Icon>
      </div>
      <div className={`absolute bottom-[22px] left-[627px] flex w-[271px] flex-col gap-1 leading-[11px] whitespace-pre ${MONO}`}>
        <span className="bg-[#464c50] text-[#a9adaf]">Select object to trim or shift-select to extend or</span>
        <span className="bg-[#4b5153] text-[#c3c6c8]"> [cuTting edges/Crossing/mOde/Project/eRase/Undo]:</span>
        <span className="bg-[#50575a] text-[#eceeee]">Select object to trim or shift-select to extend or</span>
      </div>
      <CommandLine />
    </main>
  );
}

/* ---------- status bar ---------- */

const LAYOUT_SHAPE = "[clip-path:polygon(0_0,100%_0,calc(100%-5px)_100%,5px_100%)]";
const ON = "bg-[#5583b5]";
const OFF = "bg-[#2f3842]";

function StatusBar() {
  return (
    <footer className="flex h-[22px] bg-[#232a32]">
      <div className="flex items-start pl-2.5 text-[#b4bac0]">
        <button type="button" className={`h-[13px] w-[44px] bg-[#3b444f] font-bold text-white ${LAYOUT_SHAPE}`}>Model</button>
        <button type="button" className={`h-[13px] w-12 bg-[#2d353f] ${LAYOUT_SHAPE}`}>Layout1</button>
        <button type="button" className={`h-[13px] w-12 bg-[#2d353f] ${LAYOUT_SHAPE}`}>Layout2</button>
        <button type="button" aria-label="New layout" className={`ml-0.5 flex h-[13px] w-[19px] items-center justify-center bg-[#2d353f] ${LAYOUT_SHAPE}`}>{plus}</button>
      </div>
      <div className="mt-px ml-auto flex h-[18px] text-[#e4e7e9]">
        <button type="button" className={`mr-px w-9 ${OFF}`}>MODEL</button>
        <IconButton label="Grid" className={`w-[17px] ${ON}`}><Icon w={11} h={11}><path d="M2.500 0v11M5.500 0v11M8.500 0v11M0 2.500h11M0 5.500h11M0 8.500h11" stroke="#e8eef4" /></Icon></IconButton>
        <IconButton label="Snap" className={`w-[18px] ${OFF}`}><Icon w={10} h={10}><path d="M0 1h10M0 5h10M0 9h10" stroke="#e4e7e9" strokeWidth="1.500" strokeDasharray="1.500 2.700" /></Icon></IconButton>
        <IconButton label="Snap options" className={`mr-0.5 w-3 ${OFF}`}><Caret /></IconButton>
        <IconButton label="Dynamic input" className={`w-[17px] ${ON}`}><Icon w={12} h={11}><path d="M3 0v6M0 3h6" stroke="#fff" strokeWidth="1.200" /><path d="M6 6.500h6v3.500H6z" fill="#fff" /></Icon></IconButton>
        <IconButton label="Ortho" className={`mr-px w-[18px] ${OFF}`}><Icon w={12} h={12}><path d="M1.500 0v10.500H12M1.500 7h4v3.500" stroke="#9aa3ab" /></Icon></IconButton>
        <IconButton label="Polar tracking" className={`w-[17px] ${ON}`}><Icon w={13} h={12}><circle cx="5.500" cy="6.500" r="4.500" stroke="#cfe0f0" /><path d="m5.500 6.500 4-5M5.500 6.500H13" stroke="#cfe0f0" /></Icon></IconButton>
        <IconButton label="Polar tracking options" className={`w-3 ${OFF}`}><Caret /></IconButton>
        <IconButton label="Isometric drafting" className={`w-[19px] ${OFF}`}><Icon w={12} h={12}><path d="M6 0v12M2 2l8 8" stroke="#78828b" /></Icon></IconButton>
        <IconButton label="Isometric drafting options" className={`w-[11px] ${OFF}`}><Caret /></IconButton>
        <IconButton label="Object snap tracking" className={`mr-px w-[18px] ${OFF}`}><Icon w={12} h={12}><path d="M12 1 1 10.500h11M7 5.500l3 3" stroke="#9aa3ab" /></Icon></IconButton>
        <IconButton label="Object snap" className={`w-[17px] ${ON}`}><Icon w={14} h={14}><path d="M2.500 3.500h10v9h-10z" stroke="#cfe0f0" /><circle cx="2.500" cy="2.500" r="1.800" stroke="#cfe0f0" fill="#5583b5" /></Icon></IconButton>
        <IconButton label="Object snap options" className={`mr-0.5 w-3 ${OFF}`}><Caret /></IconButton>
        <IconButton label="Annotation visibility" className={`w-[17px] ${ON}`}><Icon w={12} h={12}><path d="M5 0 6.800 7 10.500 11.500 5 9-.5 11.500 3.200 7z" fill="#fff" /><circle cx="9.500" cy="2.500" r="1.800" stroke="#cfe0f0" /></Icon></IconButton>
        <IconButton label="Auto scale" className={`w-[18px] ${OFF}`}><Icon w={12} h={12}><path d="M5 0 6.800 7 10.500 11.500 5 9-.5 11.500 3.200 7z" fill="#dfe3e6" /><path d="m10 0-2 2.500h3L9 5" stroke="#dfe3e6" /></Icon></IconButton>
        <IconButton label="Annotation scale list" className={`w-[18px] ${OFF}`}><Icon w={11} h={12}><path d="M5.500 0 7.300 7 11 11.500 5.500 9 0 11.500 3.700 7z" fill="#dfe3e6" /></Icon></IconButton>
        <button type="button" className={`mr-0.5 flex w-[25px] items-center justify-center gap-px ${OFF}`}>1:1<Caret /></button>
        <IconButton label="Workspace" className={`w-[18px] ${OFF}`}>
          <Icon w={12} h={12}><circle cx="6" cy="6" r="3" stroke="#e4e7e9" strokeWidth="2.200" />{[0, 45, 90, 135].map((a) => <path key={a} d="M6 0v2.500M6 9.500V12" stroke="#e4e7e9" strokeWidth="2" transform={`rotate(${a} 6 6)`} />)}</Icon>
        </IconButton>
        <IconButton label="Workspace options" className={`mr-px w-[11px] ${OFF}`}><Caret /></IconButton>
        <IconButton label="Annotation monitor" className={`mr-px w-[17px] ${OFF}`}><Icon w={11} h={11}><path d="M5.500 0v11M0 5.500h11" stroke="#e4e7e9" strokeWidth="1.500" /></Icon></IconButton>
        <IconButton label="Isolate objects" className={`w-[19px] ${OFF}`}><Icon w={13} h={13}><path d="M1.500.5h4v4h-4zM5.500 8 2.500 12.500h6z" stroke="#9aa3ab" /><circle cx="10" cy="6" r="2.500" stroke="#9aa3ab" /></Icon></IconButton>
        <IconButton label="Clean screen" className={`ml-1 w-[19px] ${OFF}`}><Icon w={13} h={10}><path d="M.5.500h12v9H.5z" stroke="#c3c9ce" /><path d="M2.500 7.500v-3l3 3zM10.500 2.500v3l-3-3z" fill="#c3c9ce" /></Icon></IconButton>
        <IconButton label="Customization" className={`mr-1 w-[17px] ${OFF}`}><Icon w={12} h={11}><path d="M0 1h12M0 5.500h12M0 10h12" stroke="#e4e7e9" strokeWidth="1.500" /></Icon></IconButton>
      </div>
    </footer>
  );
}

/* ---------- desktop taskbar ---------- */

function ChromeMark() {
  return (
    <>
      <circle cx="9" cy="9" r="8.500" fill="#fbc116" />
      <path d="M9 9 1.640 4.750A8.500 8.500 0 0 1 16.360 4.750z" fill="#e33b2e" />
      <path d="M9 9v8.500A8.500 8.500 0 0 1 1.640 4.750z" fill="#2da94f" />
      <path d="M9 4.750h7.360" stroke="#e33b2e" strokeWidth="1" />
      <circle cx="9" cy="9" r="4" fill="#fff" />
      <circle cx="9" cy="9" r="3.100" fill="#3f7de8" />
    </>
  );
}

const APPS: { name: string; art: ReactNode; mark?: "run" | "active" }[] = [
  { name: "Task view", art: <><path d="M0 7h12v9H0z" fill="#777" /><path d="M5 2h13v10H5z" fill="#e4e4e4" /><path d="M5 7h7v5H5z" fill="#bdbdbd" /></> },
  { name: "Chat", art: <><path d="M1 18V9a8.300 8.300 0 1 1 8.500 8.500z" fill="#6258b8" /><path d="M4.500 5.500h6.500v7H4.500zM12 8l2.500-1.500v5L12 10z" fill="#fff" /></> },
  { name: "Store", art: <><path d="M6 4V1.500h6V4" stroke="#3ea5e6" /><path d="M1 4h16v11a2 2 0 0 1-2 2H3a2 2 0 0 1-2-2z" fill="#f0f0f0" /><path d="M6 7h2.700v2.700H6z" fill="#e65428" /><path d="M9.300 7H12v2.700H9.300z" fill="#7db72f" /><path d="M6 10.300h2.700V13H6z" fill="#2b9de0" /><path d="M9.300 10.300H12V13H9.300z" fill="#f0b41a" /></> },
  { name: "Chrome", art: <ChromeMark /> },
  { name: "Edge", art: <><circle cx="9" cy="9" r="8.500" fill="#1d7fc8" /><path d="M.5 9C1 3 5 .5 9 .5c5 0 8.500 3.500 8.500 7 0 2.500-2 4-4.500 4-1.500 0-2.500-.5-2-1.500C12 7 9 5.500 6.500 6 3.500 6.300 1 7.500.5 9z" fill="#3fcf9a" /><path d="M.5 8.500C3 4.500 9 4 10.500 7c-3-.5-4.500 2-3.500 5 1 2.500 4 3.500 7.500 2.500-3 4-10 4-12.500-.5-1-1.500-1.500-3.500-1.500-5.500z" fill="#1a5fae" /></> },
  { name: "Fresco", art: <><rect x="1" y="1" width="16" height="16" rx="3" fill="#001e36" /><text x="9" y="12.500" fontSize="9.500" fontWeight="700" fill="#31a8ff" textAnchor="middle">Fr</text></> },
  { name: "Keyboard manager", art: <><path d="M4 6h14v11H4z" fill="#5f686c" /><path d="M0 1h13v8H0z" fill="#48c3cf" /><path d="M1.500 3.500h10M1.500 5.500h10M3.500 7.500h6" stroke="#e6fbfd" strokeDasharray="1 1" /></> },
  { name: "Zoom", art: <><rect x="1" y="1" width="16" height="16" rx="5" fill="#4a86ee" /><path d="M4 6h7v6H4zM11.800 8.200l2.500-1.700v5l-2.500-1.700z" fill="#fff" /></> },
  { name: "File explorer", mark: "run", art: <><path d="M0 2h6l2 2h10v12H0z" fill="#e9b93a" /><path d="M0 6h18v10H0z" fill="#f8d765" /><path d="M4 11h10v5H4z" fill="#2f7fc4" /></> },
  { name: "Chrome profile", mark: "run", art: <><ChromeMark /><circle cx="14.500" cy="3.500" r="4.500" fill="#3b8a3a" /><text x="14.500" y="5.800" fontSize="6" fill="#e8f3e8" textAnchor="middle">L</text></> },
  { name: "Webex", mark: "run", art: <><rect x="0" y="0" width="18" height="18" rx="4" fill="#0b0d10" /><ellipse cx="6" cy="8.500" rx="2.700" ry="4" stroke="#2fd0a0" strokeWidth="2.600" transform="rotate(-14 6 8.500)" /><ellipse cx="12" cy="8.500" rx="2.700" ry="4" stroke="#2b78e8" strokeWidth="2.600" transform="rotate(14 12 8.500)" /></> },
  { name: "AutoCAD", mark: "active", art: <><path d="M0 0h18v18H0z" fill="#f4e9e9" /><path d="M2.500 15 7.500 3h3.500l4.500 12h-3.300l-1-3H7L5.500 15zM8 9.500h2.500L9.300 6z" fill="#a51c2a" /></> },
  { name: "OBS Studio", mark: "run", art: <><circle cx="8.500" cy="9.500" r="7.700" fill="#26252a" stroke="#d8d8d8" strokeWidth="1.200" /><path d="M8.500 9.500c-1-3 0-5 2-6M8.500 9.500c3 .5 4.500 2 4.300 4.500M8.500 9.500c-2 2.500-4 3-6 1.500" stroke="#d8d8d8" strokeWidth="1.700" /><circle cx="15" cy="3" r="4" fill="#f01414" /></> },
];

function Taskbar() {
  return (
    <div className="flex h-9 items-center bg-[#1d1d1e] text-[#e2e2e2]">
      <button type="button" className="flex w-[262px] shrink-0 items-center gap-1 pl-3.5 text-left leading-3">
        <Icon w={21} h={26}><path d="M4.500 21.500a4.500 4.500 0 0 1 1-8.500 6 6 0 0 1 9 1 4 4 0 0 1 1 7.500z" fill="#b9c8ea" /><circle cx="14.500" cy="6" r="5.700" fill="#f0728d" /><path d="M13.300 4.500 15 3.500v6" stroke="#4a1c28" /></Icon>
        <span>81°F<br />Mostly cloudy</span>
      </button>
      <IconButton label="Start menu" className="w-[22px]">
        <Icon w={18} h={18}><path d="M0 0h8.500v8.500H0zM9.500 0H18v8.500H9.500zM0 9.500h8.500V18H0zM9.500 9.500H18V18H9.500z" fill="#4cc2f1" /></Icon>
      </IconButton>
      <label className="ml-2 flex h-6 w-[163px] shrink-0 items-center rounded-full bg-[#3a3a3b] pr-1.5 pl-2.5">
        <Icon w={11} h={11}><circle cx="4.500" cy="4.500" r="3.700" stroke="#e8e8e8" strokeWidth="1.200" /><path d="m7.300 7.300 3.400 3.400" stroke="#e8e8e8" strokeWidth="1.400" /></Icon>
        <input aria-label="Search the desktop" placeholder="Search" className="ml-1.5 min-w-0 flex-1 bg-transparent text-[10px] placeholder:text-[#cfcfcf]" />
        <Icon w={15} h={15}><circle cx="7.500" cy="7.500" r="7" fill="#eaf5fc" /><path d="M5 3v8l2.500 1.500L11 10V8.500L7 7" stroke="#2184d8" strokeWidth="1.700" /></Icon>
      </label>
      <div className="ml-0.5 grid h-full w-[425px] shrink-0 grid-cols-13">
        {APPS.map(({ name, art, mark }) => (
          <button key={name} type="button" aria-label={name} className={`my-0.5 flex flex-col items-center pt-1.5 ${mark === "active" ? "rounded-sm bg-[#2b2b2c]" : ""}`}>
            <svg width="18" height="18" viewBox="0 0 18 18" fill="none" overflow="visible" aria-hidden="true">{art}</svg>
            {mark === "run" && <span className="mt-1 h-0.5 w-1 rounded-full bg-[#9a9a9a]" />}
            {mark === "active" && <span className="mt-1 h-0.5 w-3 rounded-full bg-[#5cc0ea]" />}
          </button>
        ))}
      </div>
      <div className="ml-auto flex items-center pr-3.5">
        <IconButton label="Hidden icons" className="w-4"><Icon w={8} h={5}><path d="m.5 4.500 3.500-3.500 3.500 3.500" stroke="#fff" strokeWidth="1.300" /></Icon></IconButton>
        <IconButton label="Microphone" className="mr-2 ml-2 w-4"><Icon w={9} h={12}><rect x="2.500" y=".5" width="4" height="7" rx="2" stroke="#6fc3a8" /><path d="M.5 5.500a4 4 0 0 0 8 0M4.500 9.500V12" stroke="#6fc3a8" /></Icon></IconButton>
        <button type="button" aria-label="Network, sound and battery" className="mr-3 flex items-center gap-1.5">
          <Icon w={12} h={9}><path d="M.5 3.500a8 8 0 0 1 11 0M2.300 5.300a5.300 5.300 0 0 1 7.400 0" stroke="#fff" /><path d="M4 6.700a3 3 0 0 1 4 0L6 9z" fill="#fff" /></Icon>
          <Icon w={13} h={10}><path d="M.5 3.500h2L5.500 1v8L2.500 6.500h-2z" stroke="#fff" /><path d="M7 3.500a2.500 2.500 0 0 1 0 3M8.700 2a5 5 0 0 1 0 6M10.500.7a7 7 0 0 1 0 8.600" stroke="#fff" strokeWidth=".9" /></Icon>
          <Icon w={12} h={9}><path d="M3 2.500h7.500v5.500H1.500V5" stroke="#fff" /><path d="M1 0h3v3H1zM4 4h4v3H4zM11 4h1v2.500h-1z" fill="#fff" /></Icon>
        </button>
        <div className="text-right leading-3">12:18 PM<br />9/5/2023</div>
      </div>
    </div>
  );
}

export default function App() {
  return (
    <div className="min-h-screen bg-black pt-[79px] pr-[142px] font-['Open_Sans',sans-serif] text-[9px] leading-3 text-[#dfe2e5]">
      <div className="ml-px overflow-hidden border border-[#2f6a8a] bg-[#232a32]">
        <TitleBar />
        <MenuTabs />
        <div className="flex h-[74px] bg-[#3b444f]">
          <span className="w-0.5 shrink-0 bg-[#232a32]" />
          <DrawPanel />
          <ModifyPanel />
          <AnnotationPanel />
          <LayersPanel />
          <BlockPanel />
          <PropertiesPanel />
          <RestPanels />
        </div>
        <FileTabs />
        <Canvas />
        <StatusBar />
      </div>
      <Taskbar />
    </div>
  );
}
